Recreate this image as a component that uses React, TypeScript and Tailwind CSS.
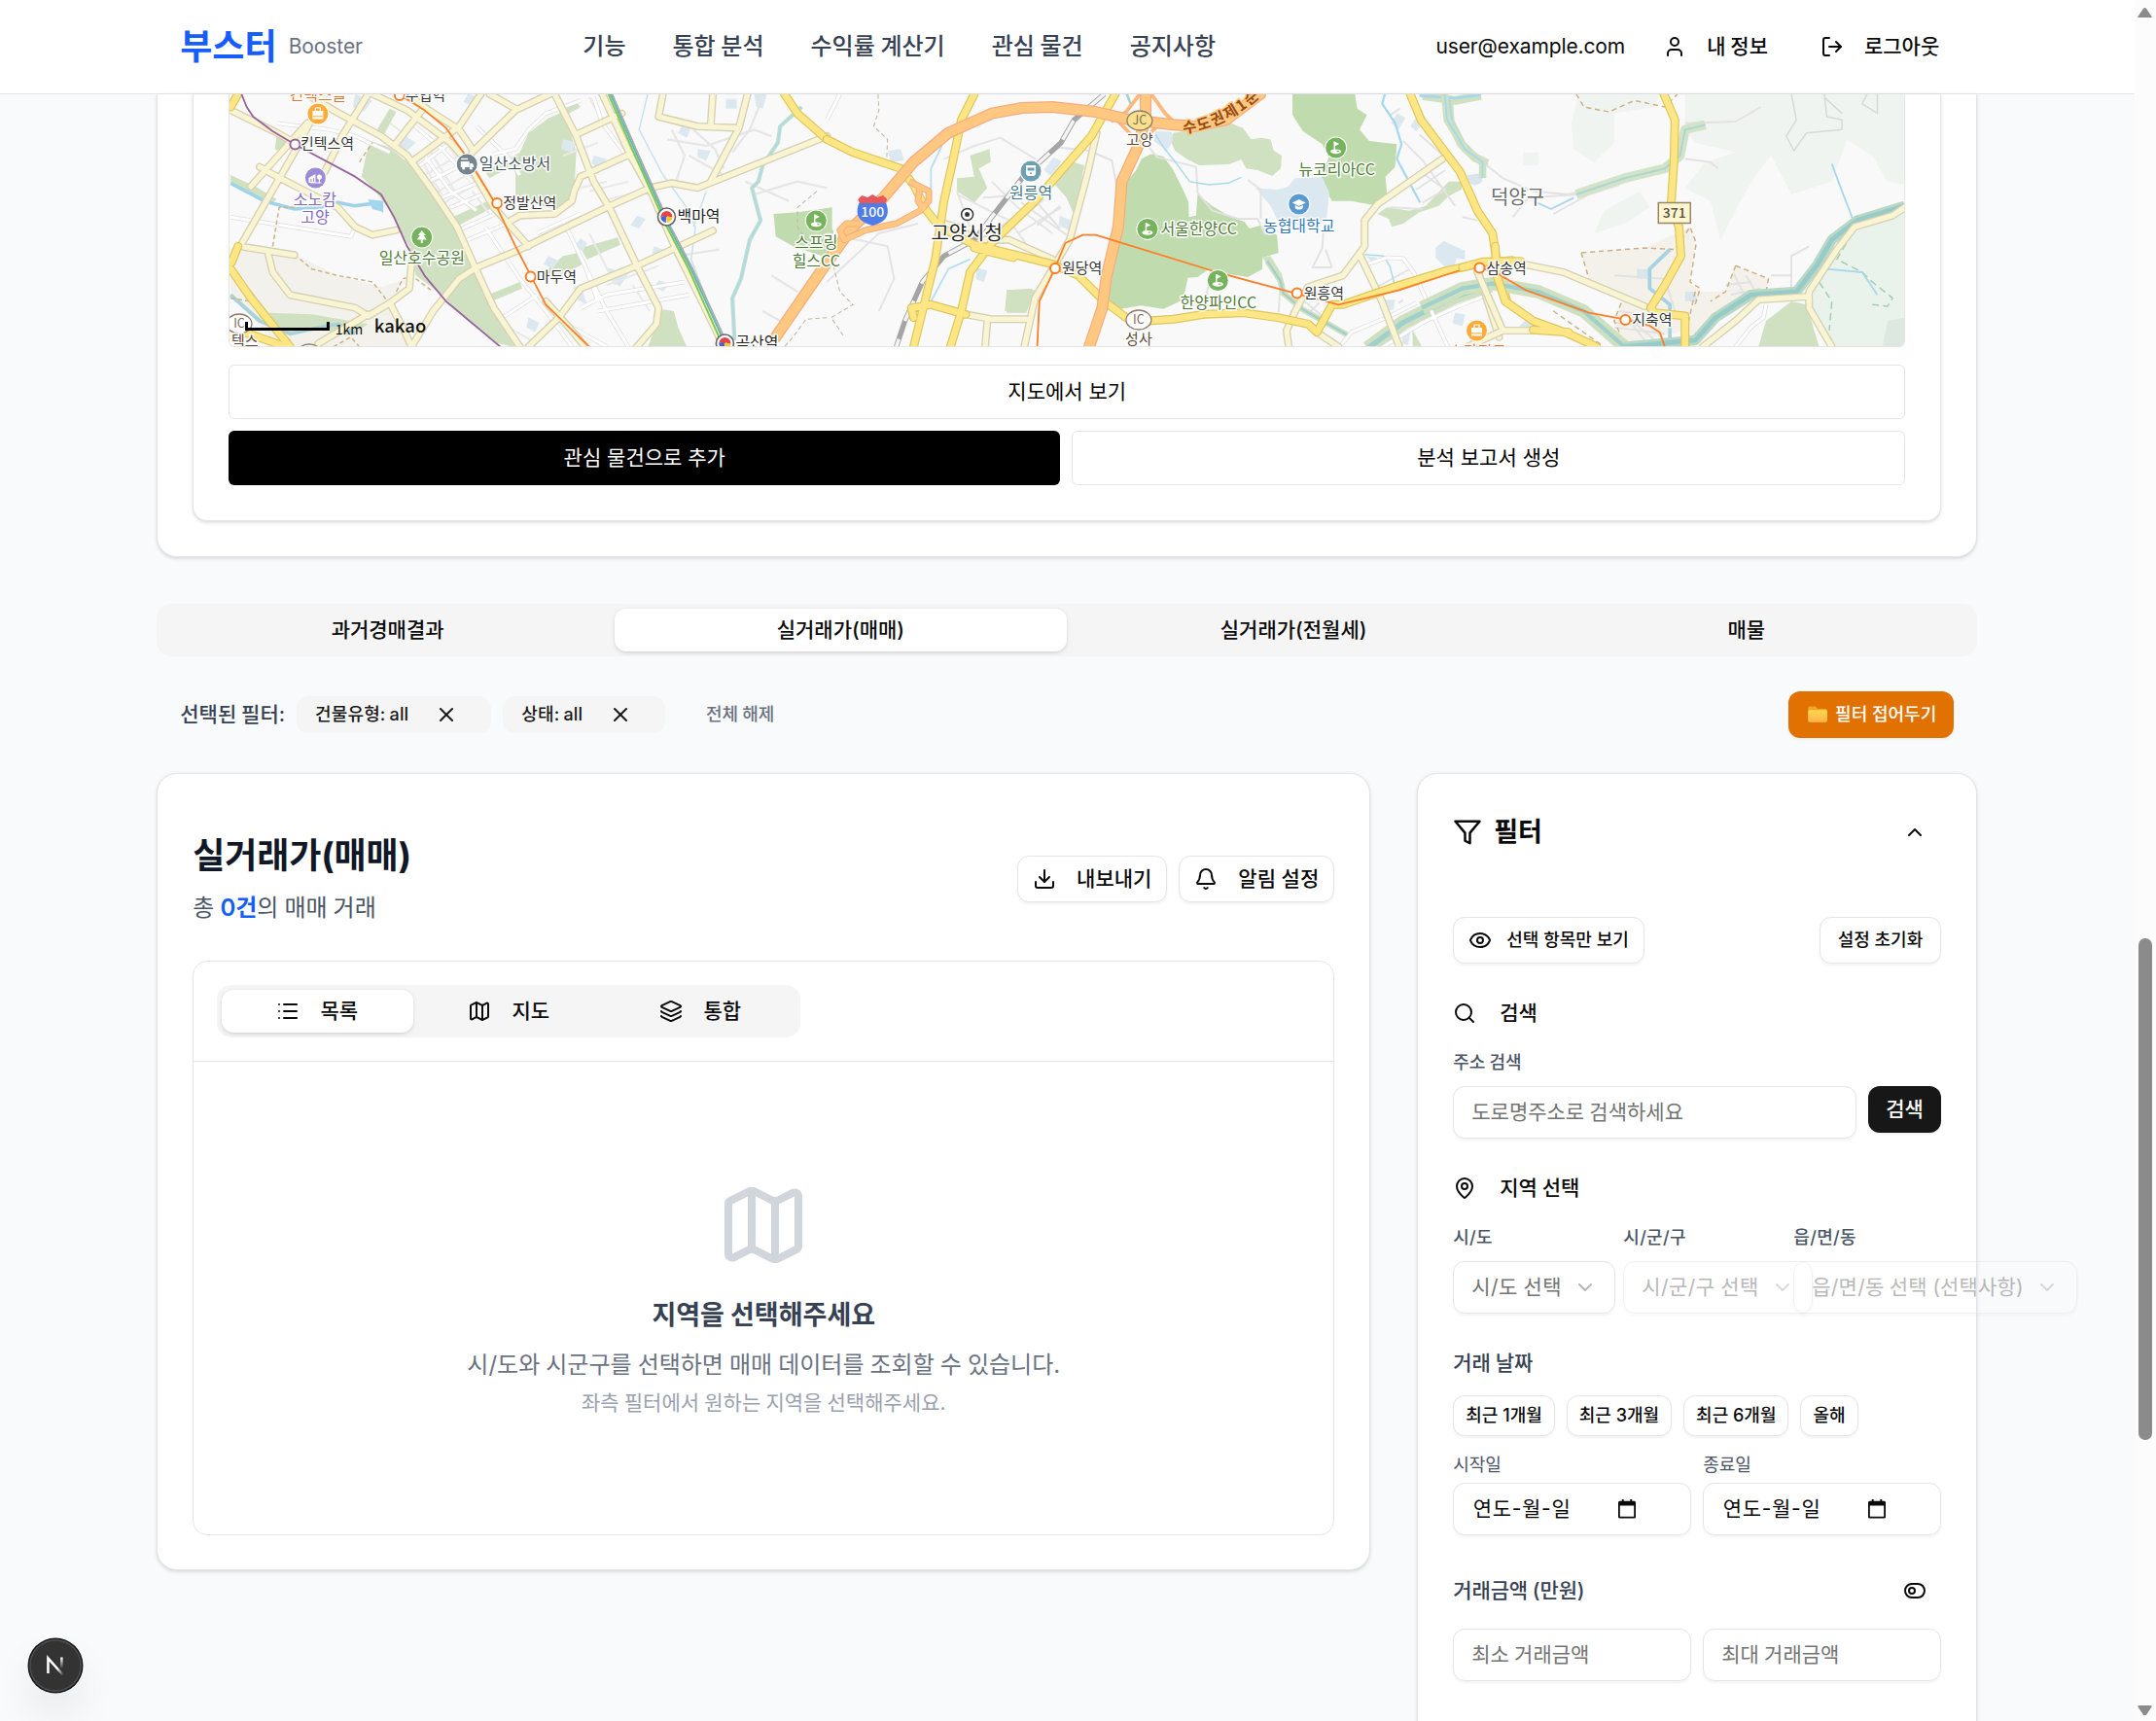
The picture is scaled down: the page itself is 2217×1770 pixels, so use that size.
import React from "react";
import {
  Bell,
  ChevronDown,
  ChevronUp,
  Download,
  Eye,
  Layers,
  List,
  LogOut,
  Map as MapIcon,
  MapPin,
  Search,
  ToggleLeft,
  User,
  X,
} from "lucide-react";

const NAV = ["기능", "통합 분석", "수익률 계산기", "관심 물건", "공지사항"];
const TABS = ["과거경매결과", "실거래가(매매)", "실거래가(전월세)", "매물"];

/* ---------- map ---------- */

type Kind = "light" | "yellow" | "motor";

const ROAD: Record<Kind, [string, number, string, number]> = {
  light: ["#d6d0b4", 5.4, "#f9f4d2", 3.6],
  yellow: ["#dcc75c", 6, "#fee685", 4.4],
  motor: ["#f3ac80", 8, "#ffc77f", 6.4],
};

function Roads({ kind, d }: { kind: Kind; d: string }) {
  const [edge, w1, fill, w2] = ROAD[kind];
  return (
    <g fill="none" strokeLinecap="round" strokeLinejoin="round">
      <path d={d} stroke={edge} strokeWidth={w1} vectorEffect="non-scaling-stroke" />
      <path d={d} stroke={fill} strokeWidth={w2} vectorEffect="non-scaling-stroke" />
    </g>
  );
}

function Line({ d, color, w, dash }: { d: string; color: string; w: number; dash?: string }) {
  return (
    <path
      d={d}
      fill="none"
      stroke={color}
      strokeWidth={w}
      strokeDasharray={dash}
      strokeLinejoin="round"
      vectorEffect="non-scaling-stroke"
    />
  );
}

function Street({ d }: { d: string }) {
  return (
    <g>
      <Line d={d} color="#dedede" w={3} />
      <Line d={d} color="#ffffff" w={2} />
    </g>
  );
}

function Label({
  x,
  y,
  t,
  color = "#333333",
  size = 15,
  anchor = "start",
  weight = 400,
}: {
  x: number;
  y: number;
  t: string;
  color?: string;
  size?: number;
  anchor?: "start" | "middle";
  weight?: number;
}) {
  return (
    <text
      x={x}
      y={y + size * 0.36}
      fontSize={size}
      fontWeight={weight}
      fill={color}
      stroke="#ffffff"
      strokeWidth={3}
      strokeLinejoin="round"
      paintOrder="stroke"
      textAnchor={anchor}
    >
      {t}
    </text>
  );
}

function Station({ x, y, color = "#ff7a1f" }: { x: number; y: number; color?: string }) {
  return <circle cx={x} cy={y} r={5} fill="#fff" stroke={color} strokeWidth={2} />;
}

function Taegeuk({ x, y }: { x: number; y: number }) {
  return (
    <g transform={`translate(${x} ${y})`}>
      <circle r={9} fill="#fff" stroke="#666" strokeWidth={1.6} />
      <path d="M-6 0a6 6 0 0 1 12 0c-2 2-4-2-6 0s-4-2-6 0z" fill="#e8434a" />
      <path d="M-6 -1a6 6 0 0 0 6 7c-2-3 1-4 0-6s-4 1-6-1z" fill="#3f66d6" />
      <path d="M0 6a6 6 0 0 0 6-6c-2 1-4-1-6 0s1 3 0 6z" fill="#f6c831" />
    </g>
  );
}

function Pin({ x, y, color, kind }: { x: number; y: number; color: string; kind: string }) {
  return (
    <g transform={`translate(${x} ${y})`}>
      <circle r={11.5} fill="#fff" />
      <circle r={10.5} fill={color} />
      {kind === "golf" && (
        <g>
          <path d="M-1.5-6.500V2" stroke="#fff" strokeWidth={1.400} />
          <path d="M-1.500-6.500L3.500-4-1.500-1.500z" fill="#fff" />
          <ellipse cx={0} cy={3.800} rx={5.500} ry={2.400} fill="#fff" />
          <ellipse cx={2} cy={3.600} rx={1.500} ry={0.700} fill={color} />
        </g>
      )}
      {kind === "tree" && <path d="M0-7l4 5h-2l3 4.500H1V6h-2V2.500h-4l3-4.500h-2z" fill="#fff" />}
      {kind === "bag" && (
        <g>
          <rect x={-5.500} y={-3} width={11} height={8.500} fill="#fff" />
          <path d="M-2.500-3v-3h5v3" fill="none" stroke="#fff" strokeWidth={1.200} />
          <path d="M-5.500 2.800h11" stroke={color} strokeWidth={1} />
        </g>
      )}
      {kind === "bus" && (
        <g>
          <rect x={-6.500} y={-3} width={9} height={6} fill="#fff" />
          <path d="M3-1h2.500l1.500 2v2h-4z" fill="#fff" />
          <path d="M-6-5.500h7" stroke="#fff" strokeWidth={1.500} />
          <circle cx={-3.500} cy={4} r={1.600} fill="#fff" />
          <circle cx={4} cy={4} r={1.600} fill="#fff" />
        </g>
      )}
      {kind === "hotel" && (
        <g>
          <path d="M-7 5V0l7-4v9z" fill="#fff" />
          <circle cx={4} cy={-1} r={2.600} fill="#fff" />
          <path d="M4 1v4M-5 5h11" stroke="#fff" strokeWidth={1.200} />
          <path d="M-4.500 1v3M-2 0v4" stroke={color} strokeWidth={1} />
        </g>
      )}
      {kind === "train" && (
        <g>
          <path d="M-5-6H5V3L3.500 5h-7L-5 3z" fill="#fff" />
          <rect x={-3.500} y={-3.500} width={7} height={3} fill={color} />
          <circle cx={0} cy={2.200} r={1} fill={color} />
        </g>
      )}
      {kind === "school" && (
        <g>
          <path d="M-7-1.500L0-5l7 3.500L0 2z" fill="#fff" />
          <path d="M-4 1v3c2 2 6 2 8 0V1L0 3z" fill="#fff" />
        </g>
      )}
    </g>
  );
}

function Junction({ x, y, t, fill }: { x: number; y: number; t: string; fill: string }) {
  return (
    <g>
      <ellipse cx={x} cy={y} rx={13} ry={10} fill={fill} stroke="#8f7d6a" strokeWidth={1.300} />
      <text x={x} y={y + 4.500} fontSize={12.500} textAnchor="middle" fill="#7a6a5a">
        {t}
      </text>
    </g>
  );
}

function KakaoMap() {
  return (
    <svg
      viewBox="235 97 1724 259"
      preserveAspectRatio="none"
      className="block h-full w-full font-['Noto_Sans_CJK_KR',sans-serif]"
    >
      <rect x={235} y={97} width={1724} height={260} fill="#f9f9f9" />

      {/* western part: Ilsan */}
      <g transform="translate(150 0) scale(0.44643 0.33333)">
        <path d="M193 770L340 785 440 850 540 885 600 860 560 930 600 1070H300L193 900z" fill="#f3f1ec" />
        <g fill="#d0e1c2">
          <path d="M515 435L560 455 600 500 640 570 690 640 720 720 760 830 790 930 830 1030 850 1072 810 1060 740 990 680 910 620 850 605 760 575 690 555 640 520 580 495 545 505 480z" />
          <path d="M880 410L925 365 960 345 975 400 990 470 985 600 960 650 920 640 850 615 850 540 845 510 790 550 780 530 860 470z" />
          <path d="M985 310L1000 330 960 360 950 340zM560 335L575 345 545 420 525 412zM705 670L800 612 805 635 715 698zM920 835L960 790 995 780 1005 815 935 860zM1000 765L1085 733 1092 755 1015 800zM1190 955L1215 960 1225 1010 1245 1070H1155zM740 935L860 870 865 890 740 962z" />
          <path d="M240 895L280 965 380 970 510 1000 470 1035 380 1010 330 1035 260 980zM300 410L325 420 310 470 295 460z" />
          <path d="M193 540L250 575 300 615 290 625 193 570z" />
        </g>
        <g fill="#dce8f0">
          <path d="M740 290l30 10-15 30-25-15zM590 415l30 25-25 30-15-25zM480 290l40 20-20 35-25-15zM960 430l30 10-10 30-25-10zM1030 480l30 10-15 30-20-15zM1130 665l20 10-15 30-20-10zM1000 735l15 15-10 25-20-15zM925 790l25 15-15 25-20-15zM1060 825l50 20-20 40-20-20zM985 880l20 20 10 40-30-20zM1180 865l25 10-15 25-20-15zM1235 385l20 10-10 30-20-15zM1270 460l30 5-10 30-20-10zM1400 290h30l-10 45-15-5zM1335 305h25v30h-25zM880 980l25 15-10 30-20-15zM1170 760l20 10-10 20-15-10z" />
        </g>
        <path d="M1445 660L1500 655 1580 640V800L1490 760 1450 730z" fill="#c0dbad" />
        <Line
          d="M635 500L680 600M655 470L710 590M690 440L770 590M640 540L720 480M650 570L740 500M660 600L750 530M680 630L770 560M1020 300L1060 400M1040 440L960 480M1060 560L1000 580M560 380L600 420M1020 590L1110 560M1050 620L1110 600M1020 720L1080 880M1060 880L1180 820M820 1000L900 1060M750 590L790 660M1120 880L1160 960"
          color="#e9e9e9"
          w={1.400}
        />
        <Street d="M610 380L680 460 750 560M640 480L700 590 760 650M760 390L830 480 860 540M800 475L850 460 880 400 920 350 1000 310M650 560L740 500M620 520L700 440M680 610L770 560M700 640L790 590M900 720L1000 660M960 680L1060 960 1110 1070M720 710L820 650M740 740L830 690M780 700L860 860 920 960 980 1070M820 980L900 910M1000 950L1060 910 1240 870M1040 960L1250 910M300 380L420 400 480 420 560 470M1030 300L1050 380 1100 470M193 670L470 730 480 700M940 980L1060 1070M1010 820L1040 930" />
        <Line
          d="M1210 400L1240 480 1220 560M1260 400L1310 460 1330 520M1200 430L1290 450 1400 400 1440 420M1420 300L1390 400 1350 470M1250 480L1330 540M1220 790L1320 770M1400 600L1500 560 1568 580M1420 960L1460 990 1500 950M1380 560L1480 620M1440 850L1500 900"
          color="#e6e6e6"
          w={1.500}
        />
        <Line d="M1155 290L1135 400 1190 540 1245 640 1265 700 1255 800 1290 920M1290 590L1260 700" color="#c5e4ea" w={1} />
        <Line
          d="M1510 330L1460 390 1455 440 1420 510 1410 560 1395 580 1415 680 1390 740 1370 860 1350 920 1355 1050"
          color="#c4dfcf"
          w={2.800}
        />
        <Line
          d="M1510 330L1460 390 1455 440 1420 510 1410 560 1395 580 1415 680 1390 740 1370 860 1350 920 1355 1050"
          color="#aedbe0"
          w={1.400}
        />
        <Line d="M193 565L270 620 340 645 400 640 440 625 480 635 540 625" color="#9fd3ea" w={2.400} />
        <path d="M510 615L545 620 545 655 520 645z" fill="#a3d6ee" />
        <Line d="M193 910L260 990 330 1030 380 1015 440 1000 480 1030" color="#a9d3d8" w={2.600} />
        <Line
          d="M340 785L380 830 440 850 520 870 555 930M430 1070L470 1040 490 1070M290 760L305 640 350 640M490 500L520 440M193 920L240 930 330 1050M620 860L660 900M575 900L590 860 620 850"
          color="#c9b48b"
          w={1}
          dash="3 2"
        />
        <Line d="M1545 590L1500 640 1500 700 1530 760M1568 980L1520 985 1490 1040 1470 1070" color="#bdb7a5" w={0.700} dash="3 2" />
        <Roads
          kind="light"
          d="M193 340L300 410 340 440M380 300L430 340 540 420 600 480 660 590 715 700 755 820 800 950 860 1070M520 290L600 340 700 440 740 500 800 640 880 760M600 290L650 340 720 400 750 460M370 380L240 575M510 290L450 420 410 530M410 290L340 470 215 760M260 515L300 545 380 600 440 640 480 700 520 725 575 710M215 760L340 787M280 785L290 840 330 910 480 950 510 975 560 935 605 890 610 810M395 1060L510 970M560 935L590 1010 610 1070 660 960 720 860 760 825 860 770 1060 640 1160 580 1210 565 1270 580 1568 420M610 500L720 390 770 290M640 330L570 450M750 470L850 340 930 290M790 290L850 335M940 290L990 420 1030 560 1070 650 1130 820 1180 950 1175 1000 1130 1070M990 415L1095 350M1115 475L1000 545 985 590 980 620 940 660 860 665 840 680M1050 290L1115 480 1165 600 1220 770 1280 930 1330 1070M1305 712L1130 820 1000 890 950 980 880 1070M1190 290L1180 360 1270 390 1365 395 1385 290M1305 290L1300 390M1365 395L1300 560M920 930L980 1020 1010 1070"
        />
        <Roads kind="yellow" d="M210 760L195 810M193 830L240 920 300 1020 330 1070M193 1010L320 1070M210 290L193 330M1470 290L1500 350 1568 430" />
        <Line
          d="M218 290L230 330 245 360 290 405 340 445 480 545 540 600 570 670 600 760 640 850 690 930 815 1070"
          color="#98629a"
          w={1.200}
        />
        <Line d="M1064 290L1119 460 1199 700 1249 830 1326 1060" color="#7fc84e" w={1.300} />
        <Line d="M1069 290L1124 460 1204 700 1255 830 1333 1060" color="#5fb8b4" w={1.300} />
        <Line d="M1073 290L1128 460 1208 700 1259 830 1338 1060" color="#a8a8a8" w={1} />
        <Line d="M580 290L640 340 690 395 740 490 800 620 850 760 885 850 920 940 1020 1070" color="#ff7f27" w={1.200} />
      </g>

      {/* middle part: Goyang */}
      <g transform="translate(850 0) scale(0.44643 0.33333)">
        <g fill="#d0e1c2">
          <path d="M330 480L375 460 378 500 350 520 370 580 340 625 300 590 300 550 340 545zM415 895L480 895 460 965 410 960z" />
        </g>
        <path d="M-5 700L15 710 15 810-5 820z" fill="#c0dbad" />
        <g fill="#dce8f0">
          <path d="M140 465l30-5 8 35-30 5zM345 825l25 10-8 35-18-8zM1450 965l22 5-6 35-20-5z" />
        </g>
        <Line
          d="M270 490L340 450 400 425 480 490M300 600L420 680 480 790M380 560L440 640 520 720M360 610L460 600M400 700L500 600M440 720L540 640M300 590L330 700M0 720L140 760 155 860 120 960M210 690L120 720 0 870"
          color="#e4e4e4"
          w={1.300}
        />
        <Street d="M30 290L0 370" />
        <Line d="M118 290L120 340 108 390 140 430 138 490M15 820L30 900 60 940 10 980 40 1040" color="#bdb7a5" w={0.700} dash="3 2" />
        <Line d="M265 450L240 520 240 600M330 800L280 830 240 930M690 290L700 320" color="#b5dff0" w={1.200} />
      </g>

      {/* golf courses, campus and river around Wonheung */}
      <g transform="translate(1030 95) scale(0.33333)">
        <g fill="#c0dbad">
          <path d="M462 190L500 198 530 240 560 300 577 340 578 385 600 380 605 315 650 350 700 380 750 400 765 420 800 410 850 440 855 495 805 510 805 545 760 570 700 560 640 545 605 570 575 572 560 640 500 668 430 658 345 672 318 655 335 540 362 440 372 310 395 265 415 240 432 205z" />
          <path d="M898 0H1090L1098 50 1128 70 1105 115 1135 150 1220 160 1215 230 1185 260 1190 315 1150 348 1080 335 1020 335 1000 300 985 265 1010 200 990 160 930 120 898 70z" />
        </g>
        <g fill="#d0e1c2">
          <path d="M530 125L620 110 700 92 745 110 770 145 800 140 830 145 840 180 865 195 862 235 835 258 790 240 755 235 740 208 700 222 610 225 570 205 535 180 520 145zM160 280L175 240 210 212 255 225 240 310 222 375 200 325zM15 610L95 605 90 640 70 680 15 680zM1160 375L1190 355 1260 365 1310 350 1380 275 1425 275 1420 300 1380 320 1350 350 1290 370 1240 405 1205 415 1195 390zM805 510L830 505 865 560 875 600 865 605 845 560zM1268 730L1300 790H1270z" />
        </g>
        <g fill="#dce8f0">
          <path d="M783 295L850 300 885 290 905 265 990 262 1012 310 1002 400 860 410 830 350zM475 120L525 122 528 150 510 180 470 150zM1340 480L1365 458 1432 490 1430 515 1405 512 1395 545 1370 540 1340 510zM160 200L185 212 155 260 130 240zM1220 65L1248 78 1225 115 1203 95zM1290 60L1310 85 1280 120 1262 105zM180 380L215 395 205 425 175 410zM1185 640L1215 640 1210 670 1185 675zM1400 680L1430 690 1420 720 1392 710zM1125 505L1160 510 1150 530zM1240 740L1262 740 1255 780 1235 775zM1450 270L1480 250 1485 275 1460 290z" />
        </g>
        <Line
          d="M455 170L480 200 600 230 605 310M605 310L650 365 730 390 790 390 815 440M155 180L180 170 270 180 340 210 355 290M60 340L200 440M100 330L180 420M70 380L130 330M110 410L180 350M760 270L800 300 800 390M995 410L990 480 960 540 1020 540M1000 485L1020 540M640 590L620 680M860 600L855 680M930 640L1000 700M950 680L980 650M1200 70L1230 50M1240 150L1300 210 1400 350M1290 130L1380 210M1280 300L1370 240M1300 340L1370 300 1300 250M1200 355L1300 360M1270 540L1160 600M1225 650L1240 640"
          color="#e2e2e2"
          w={1.300}
        />
        <Line d="M475 130L500 170 540 220 580 275 640 285 700 280 740 262" color="#a9dbe8" w={1} />
        <Line d="M385 0L400 40" color="#9fd0cc" w={1.500} />
        <Line d="M1185 0L1175 35 1215 95 1235 160 1220 205 1260 280 1292 340" color="#a5d8ec" w={1.500} />
        <Line d="M1300 10L1400 25 1480 10M1380 20L1385 90 1420 160 1460 200 1500 220" color="#d0e1c2" w={6} />
        <Line d="M1290 10L1400 18 1480 8M1380 20L1390 90 1430 160 1470 200 1500 225" color="#a5d8ec" w={1.800} />
        <Line d="M820 520L860 580 870 620 930 670 1000 710 1070 750" color="#cfe0c0" w={4} />
        <Line d="M820 520L860 580 870 620 930 670 1000 710 1070 750" color="#9fd0cc" w={1.500} />
        <Line d="M1120 500L1180 505 1200 540 1215 600" color="#a9dbe8" w={1} />
        <Line d="M1130 790L1240 710 1400 630 1510 595" color="#cfe0c0" w={10} />
        <Line d="M1130 790L1240 710 1400 630 1510 595" color="#9fd0cc" w={3.500} />
        <Street d="M1130 530L1190 510 1240 512 1275 560 1320 660 1380 790M1040 790L1080 740 1200 690 1280 650M1170 790L1300 710 1410 660 1500 625" />
      </g>

      {/* middle part: road network */}
      <g transform="translate(850 0) scale(0.44643 0.33333)">
        <Roads
          kind="light"
          d="M622 410L600 540 560 740 520 830 480 920 455 1070M320 970L380 985 460 985M370 990L365 1070M270 690L300 700 340 740 420 740 470 770 520 800M1420 490L1270 630 1240 680 1240 760 1190 850 1110 885 1080 960 1060 1020 1065 1070M1230 790L1280 930 1320 1070M1500 830L1550 1040M1130 1025L1180 1070"
        />
        <Line d="M640 290L570 370 540 440 450 550 380 670 340 740 270 790 220 870 180 990 160 1070" color="#a5a5a5" w={3.600} />
        <Line
          d="M640 290L570 370 540 440 450 550 380 670 340 740 270 790 220 870 180 990 160 1070"
          color="#f4f4f4"
          w={2.300}
          dash="15 13"
        />
        <Roads
          kind="yellow"
          d="M0 430L60 470 170 520 200 570 230 650 260 700 340 755 520 815 580 850 640 930 690 980 740 990 800 985 870 970 960 965 1040 980 1110 1000 1130 1025 1165 940 1190 940 1320 880 1430 835 1500 815 1580 803M340 290L310 370 290 500 270 620 250 800 200 1070M665 290L610 420 480 620 380 750 330 840 310 960 285 1070M1345 290L1370 370 1460 530 1500 650 1535 720 1545 810 1568 930M320 970L240 940 195 950 200 980M340 765L430 795"
        />
        <Line d="M722 290L690 345 655 375M748 290L780 350 810 388M672 375L705 420M765 385L735 425" color="#ffb878" w={2.500} />
        <Roads kind="motor" d="M735 290L735 360 718 450 680 560 672 700 645 850 635 950 605 1070" />
        <Roads
          kind="motor"
          d="M-118 1040L0 810 60 700 130 610 200 500 280 410 380 350 450 333 520 330 620 345 700 370 800 385 850 390 920 370 1000 290"
        />
        <g fill="none" strokeLinejoin="round">
          <Line d="M190 560L235 590 235 620 215 650 160 690 90 710 40 740 30 710 45 690 75 690M215 570L210 620 225 650" color="#f3ac80" w={4.600} />
          <Line d="M190 560L235 590 235 620 215 650 160 690 90 710 40 740 30 710 45 690 75 690M215 570L210 620 225 650" color="#ffc77f" w={3.300} />
        </g>
        <Line
          d="M485 1070L490 930 525 830 550 750 590 725 620 725 900 840 1080 905 1180 940 1320 895 1480 825 1510 825 1568 860"
          color="#ff7f27"
          w={1.200}
        />
      </g>

      {/* eastern part: Deogyang */}
      <g transform="translate(1400 0) scale(0.52105 0.33333)">
        <g fill="#eff4f0">
          <path d="M430 290H590L580 330 500 350 500 440 460 500 420 460 415 380z" />
          <path d="M640 290H1074V570L1040 560 1010 480 960 430 930 560 850 600 810 480 780 540 750 620 710 740 690 620 640 580 680 500 740 470 660 440 640 400z" />
          <path d="M480 650L550 590 570 640 520 690 460 720zM320 470h30v40h-30z" />
        </g>
        <path d="M1074 650V1072H930L890 950 900 850 970 720z" fill="#eaf2ec" />
        <path d="M435 780L560 765 650 700 660 750 650 870 670 900 640 1020 520 1060 500 990 520 910 450 860z" fill="#f4f1eb" />
        <path d="M740 820L805 860 800 900 760 910 700 990 640 1060 650 900 720 900z" fill="#f4f1eb" />
        <path d="M785 1070L800 990 850 930 880 940 905 1070z" fill="#d0e1c2" />
        <path d="M1030 1070L1040 990 1074 980V1070z" fill="#dde9e0" />
        <path d="M545 830h25v30h-25zM640 900h20l5 30h-25zM210 540l30-5-5 30-20 5zM310 1010l20-30 15 30z" fill="#d9e6ee" />
        <Line
          d="M240 500L280 550 340 590 410 600 520 550M300 670L330 610 430 600M380 660L450 600 510 570M640 380L740 375 790 330M640 490L690 500 705 520M500 850L600 860 620 960M720 880L770 870M730 910L790 890M500 1010L600 1030M530 980L580 1050M510 960L600 980M500 995L590 1010M520 970L560 1050M550 970L600 1050M810 850L850 850M850 900V790L885 760M200 670L230 680M735 840L760 920M760 850L780 900"
          color="#e2e2e2"
          w={1.300}
        />
        <Line
          d="M435 780L450 860M435 780L560 765 620 770 650 700 662 750 650 870 670 890 660 940M740 820L805 860 800 900M740 820L720 900 690 930M520 910L500 990 520 1060M380 960L480 1070M425 290L440 330 490 345 540 310 600 330 625 290M660 900L640 1040M690 1000L760 915"
          color="#cdb083"
          w={1}
          dash="3.500 2.500"
        />
        <Line d="M850 290L860 370 840 420 855 465 880 410 950 400 950 370 920 360 915 290M915 300L950 350M1000 290L990 320 1020 350 1020 290" color="#d5dad5" w={1} />
        <Line d="M970 720L940 800 990 840 1010 870 1050 920 1040 945 1010 940M905 870L930 930 925 1020" color="#9fcfae" w={1} dash="5 3" />
        <Line d="M425 600L520 550 600 520 630 480 640 400 680 385" color="#d3e3c8" w={6.500} />
        <Line d="M425 600L520 550 600 520 630 480 640 400 680 385" color="#a9d6d2" w={1.300} />
        <Line d="M165 290L170 370 205 460 240 500 240 550" color="#d0e1c2" w={5} />
        <Line d="M165 290L170 370 205 460 240 500 240 550M930 505L950 590 975 690M340 620L375 645 420 610M920 830L990 840 1020 910" color="#a5d8ec" w={1.200} />
        <Line d="M610 770L570 830 570 890 610 940 610 1070" color="#a5d3e4" w={2.500} />
        <Line d="M120 950L200 890 260 875 350 900 440 960 520 1070" color="#cfe0c0" w={9} />
        <Line d="M120 950L200 890 260 875 350 900 440 960 520 1070" color="#9fd0cc" w={2.800} />
        <Line d="M520 1070L660 1050 700 980 770 910 860 900 900 820 930 740 980 680 1074 635" color="#b9d8c4" w={7} />
        <Line d="M520 1070L660 1050 700 980 770 910 860 900 900 820 930 740 980 680 1074 635" color="#96cbc9" w={3.200} />
        <Street d="M800 940L795 980 770 1010 740 1070" />
        <Roads
          kind="light"
          d="M320 815L400 840 560 945M230 840L280 1020 210 1070M280 1020L340 1020M1074 640L1050 665 975 700 940 770 885 900 885 950 930 1070M880 915L785 925 740 990 675 1070"
        />
        <Roads
          kind="yellow"
          d="M598 290L620 370 618 500 612 640 628 700 632 790 600 880 572 950 580 965 640 975 640 1070M265 760L268 850 285 930 340 990 410 1030 465 1070M200 825L240 808 315 806M340 1018L410 1025"
        />
        <Line d="M245 830L265 840 325 895 450 965 520 985 570 1005 590 1025 600 1070" color="#ff7f27" w={1.200} />
      </g>

      <Junction x={245} y={333} t="IC" fill="#ffffff" />
      <Junction x={317} y={364} t="" fill="#ffffff" />
      <Junction x={1172} y={124} t="JC" fill="#fbe08c" />
      <Junction x={1171} y={329} t="IC" fill="#ffffff" />

      <Pin x={326} y={117} color="#ffab38" kind="bag" />
      <Pin x={323.5} y={183} color="#9c8bd6" kind="hotel" />
      <Pin x={433} y={244} color="#76b35c" kind="tree" />
      <Pin x={479.5} y={169} color="#74858f" kind="bus" />
      <Pin x={839} y={227} color="#76b35c" kind="golf" />
      <Pin x={1060} y={176} color="#6f9fb2" kind="train" />
      <Pin x={1374} y={152} color="#76b35c" kind="golf" />
      <Pin x={1180} y={235.5} color="#76b35c" kind="golf" />
      <Pin x={1252.5} y={288.5} color="#76b35c" kind="golf" />
      <Pin x={1336} y={210} color="#5b9ad0" kind="school" />
      <Pin x={1519} y={340} color="#ffab38" kind="bag" />

      <Station x={302.5} y={148.5} color="#98629a" />
      <Station x={410} y={98} />
      <Station x={510.5} y={209} />
      <Station x={545} y={284.5} />
      <Station x={1085} y={276} />
      <Station x={1334} y={301.5} />
      <Station x={1522} y={275.5} />
      <Station x={1672} y={329} />
      <Taegeuk x={685} y={223} />
      <Taegeuk x={745} y={353} />

      <g>
        <path d="M882 205l4-4 6 2 5-3 5 3 6-2 4 4-2 5h-26z" fill="#e9575b" />
        <path d="M883 209h28c3 8 2 14-3 18-4 3-8 4-11 5-3-1-7-2-11-5-5-4-6-10-3-18z" fill="#4e7ce8" />
        <text x={897} y={223} fontSize={14} fontWeight={500} textAnchor="middle" fill="#fff">
          100
        </text>
      </g>
      <g>
        <rect x={1706} y={208.5} width={33} height={21} fill="#fdf6cf" stroke="#9a8468" strokeWidth={1.5} />
        <text x={1722.5} y={224} fontSize={14} fontWeight={500} textAnchor="middle" fill="#5c503f">
          371
        </text>
      </g>
      <circle cx={994.5} cy={220.5} r={6} fill="#fff" stroke="#333" strokeWidth={1.5} />
      <circle cx={994.5} cy={220.5} r={2.5} fill="#333" />

      <path id="ring-road" d="M1217 137Q1264 133 1308 88" fill="none" />
      <text fontSize={15.5} fontWeight={700} letterSpacing={1.6} fill="#9a4a12" stroke="#ffc77f" strokeWidth={3} paintOrder="stroke">
        <textPath href="#ring-road">수도권제1순</textPath>
      </text>

      <Label x={326} y={97} t="킨텍스몰" color="#e8742a" size={16} anchor="middle" />
      <Label x={416} y={98} t="주엽역" />
      <Label x={308} y={148} t="킨텍스역" />
      <Label x={492} y={168.5} t="일산소방서" size={16} color="#45525c" />
      <Label x={323} y={205} t="소노캄" size={16} color="#8068c4" anchor="middle" />
      <Label x={323} y={223} t="고양" size={16} color="#8068c4" anchor="middle" />
      <Label x={433} y={265} t="일산호수공원" size={16} color="#4d7a33" anchor="middle" />
      <Label x={516.5} y={208.5} t="정발산역" />
      <Label x={551} y={284.5} t="마두역" />
      <Label x={696} y={222.5} t="백마역" size={16} color="#222222" />
      <Label x={756} y={352} t="곡산역" size={16} color="#222222" />
      <Label x={237} y={351} t="텍스" color="#5c4a3a" />
      <Label x={839} y={249.5} t="스프링" size={16} color="#4d7a33" anchor="middle" />
      <Label x={839} y={268} t="힐스CC" size={16} color="#4d7a33" anchor="middle" />
      <Label x={994} y={240} t="고양시청" size={20} color="#222222" anchor="middle" />
      <Label x={1060} y={198} t="원릉역" size={16} color="#3f7690" anchor="middle" />
      <Label x={1172} y={143.5} t="고양" color="#5c4a3a" anchor="middle" />
      <Label x={1171} y={349} t="성사" color="#5c4a3a" anchor="middle" />
      <Label x={1375} y={174} t="뉴코리아CC" size={16} color="#4d7a33" anchor="middle" />
      <Label x={1336} y={232} t="농협대학교" size={16} color="#2f75bd" anchor="middle" />
      <Label x={1193.5} y={235.5} t="서울한양CC" size={16} color="#4d7a33" />
      <Label x={1253} y={311} t="한양파인CC" size={16} color="#4d7a33" anchor="middle" />
      <Label x={1092} y={276} t="원당역" />
      <Label x={1341} y={302} t="원흥역" />
      <Label x={1529} y={275.5} t="삼송역" />
      <Label x={1679} y={329} t="지축역" />
      <Label x={1561} y={203} t="덕양구" size={20} color="#6b6b6b" anchor="middle" />
      <Label x={1520} y={361} t="스타필드" size={16} color="#e8742a" anchor="middle" />

      <path d="M252.500 331v7.500h84V331" fill="none" stroke="#000" strokeWidth={3} />
      <text x={344} y={344} fontSize={14} fill="#111">
        1km
      </text>
      <text x={384} y={342} fontSize={18.5} fontWeight={500} fill="#111">
        kakao
      </text>
    </svg>
  );
}

/* ---------- page parts ---------- */

function Header() {
  return (
    <header className="h-[64.670px] w-full shrink-0 border-b border-gray-200 bg-white pr-[15px]">
      <div className="mx-auto flex h-16 max-w-7xl items-center justify-between px-8">
        <div className="flex items-center">
          <span className="text-2xl font-bold text-blue-600">부스터</span>
          <span className="ml-2 text-sm tracking-[-0.05px] text-gray-500">Booster</span>
        </div>
        <nav className="flex gap-8">
          {NAV.map((n) => (
            <span key={n} className="text-base font-medium text-gray-700">
              {n}
            </span>
          ))}
        </nav>
        <div className="flex items-center gap-4 text-sm">
          <span className="tracking-[-0.080px] text-neutral-950">user@example.com</span>
          <div className="flex items-center gap-4 font-medium text-neutral-950">
            <span className="flex h-8 items-center gap-3.5 px-2.5">
              <User size={16} />내 정보
            </span>
            <span className="flex h-8 items-center gap-3.5 px-2.5">
              <LogOut size={16} />
              로그아웃
            </span>
          </div>
        </div>
      </div>
    </header>
  );
}

function Chip({ label }: { label: string }) {
  return (
    <span className="flex h-[25.5px] items-center gap-2 rounded-[8px] border border-transparent bg-neutral-100 px-3 text-xs font-medium text-neutral-900">
      <span className="tracking-[0.080px]">{label}</span>
      <span className="px-2.5">
        <X size={16} />
      </span>
    </span>
  );
}

function FolderGlyph() {
  return (
    <svg viewBox="0 0 16 14" className="h-[11.5px] w-[13.5px]">
      <defs>
        <linearGradient id="folder" x1="0" y1="0" x2="0" y2="1">
          <stop offset="0" stopColor="#ffd94f" />
          <stop offset="1" stopColor="#ffb04a" />
        </linearGradient>
      </defs>
      <path d="M0 2a1.500 1.500 0 0 1 1.500-1.500h4.500l2 2h6.500A1.500 1.500 0 0 1 16 4v8a1.500 1.500 0 0 1-1.500 1.500h-13A1.500 1.500 0 0 1 0 12z" fill="#f2a622" />
      <path d="M0 5a1.500 1.500 0 0 1 1.500-1.500H14.500A1.500 1.500 0 0 1 16 5v7a1.500 1.500 0 0 1-1.500 1.500h-13A1.500 1.500 0 0 1 0 12z" fill="url(#folder)" />
    </svg>
  );
}

function FunnelIcon() {
  return (
    <svg
      viewBox="0 0 24 24"
      className="size-5"
      fill="none"
      stroke="currentColor"
      strokeWidth={2}
      strokeLinecap="round"
      strokeLinejoin="round"
    >
      <polygon points="22 3 2 3 10 12.460 10 19 14 21 14 12.460 22 3" />
    </svg>
  );
}

function OutlineButton({ children, className }: { children: React.ReactNode; className: string }) {
  return (
    <button
      className={`flex items-center rounded-[8px] border border-neutral-200 bg-white font-medium text-neutral-950 shadow-xs ${className}`}
    >
      {children}
    </button>
  );
}

function TextBox({ placeholder, className = "" }: { placeholder: string; className?: string }) {
  return (
    <div
      className={`flex h-9 items-center rounded-[8px] border border-neutral-200 px-3 text-sm text-neutral-500 shadow-xs ${className}`}
    >
      {placeholder}
    </div>
  );
}

function SelectBox({ label, text, disabled, spacing }: { label: string; text: string; disabled?: boolean; spacing: string }) {
  return (
    <div className="w-[111px] shrink-0">
      <div className="text-xs font-medium tracking-[0.2px] text-gray-600">{label}</div>
      <div
        className={`mt-2 flex h-9 w-max items-center gap-2 rounded-[8px] border border-neutral-200 px-3 text-sm whitespace-nowrap text-neutral-500 shadow-xs ${spacing} ${
          disabled ? "opacity-50" : ""
        }`}
      >
        {text}
        <ChevronDown size={16} className="opacity-50" />
      </div>
    </div>
  );
}

function DateBox({ label }: { label: string }) {
  return (
    <div className="flex-1">
      <div className="text-xs text-gray-600">{label}</div>
      <div className="mt-1 flex h-9 items-center rounded-[8px] border border-neutral-200 px-[13px] text-sm text-neutral-950 shadow-xs">
        <span className="w-[99.500px] tracking-[0.450px]">연도-월-일</span>
        <svg viewBox="0 0 12 13" className="h-[13px] w-3" fill="#0a0a0a">
          <path d="M2.500 0h1.300v1.200h4.400V0h1.300v1.200H11a1 1 0 0 1 1 1V12a1 1 0 0 1-1 1H1a1 1 0 0 1-1-1V2.200a1 1 0 0 1 1-1h1.500zM1.200 4.300v7.500h9.600V4.300z" />
        </svg>
      </div>
    </div>
  );
}

function PropertyCard() {
  return (
    <section className="rounded-b-[14px] border-x border-b border-neutral-200 bg-white px-6 pb-6 shadow-sm">
      <div className="rounded-b-[10px] border-x border-b border-neutral-200 bg-white px-6 pb-6 shadow-sm">
        <div className="h-[173.330px] overflow-hidden rounded-b-[4px] border-x border-b border-neutral-200">
          <KakaoMap />
        </div>
        <button className="mt-3 flex h-[37.330px] w-full items-center justify-center rounded-[4px] border border-neutral-200 text-sm text-black">
          지도에서 보기
        </button>
        <div className="mt-2 flex gap-2 text-sm">
          <button className="h-[37.330px] flex-1 rounded-[4px] bg-black text-white">관심 물건으로 추가</button>
          <button className="h-[37.330px] flex-1 rounded-[4px] border border-neutral-200 text-black">분석 보고서 생성</button>
        </div>
      </div>
    </section>
  );
}

function TradeCard() {
  return (
    <section className="h-[546.700px] w-[832px] rounded-[14px] border border-neutral-200 bg-white px-6 pt-10 shadow-sm">
      <div className="flex items-center justify-between">
        <div>
          <h2 className="text-2xl leading-8 font-bold tracking-[-0.1px] text-gray-900">실거래가(매매)</h2>
          <p className="mt-2 text-base text-gray-600">
            총 <span className="font-semibold text-blue-600">0건</span>의 매매 거래
          </p>
        </div>
        <div className="flex gap-2">
          <OutlineButton className="h-8 gap-3.5 px-2.5 text-sm">
            <Download size={16} />
            내보내기
          </OutlineButton>
          <OutlineButton className="h-8 gap-3.5 px-2.5 text-sm">
            <Bell size={16} />
            알림 설정
          </OutlineButton>
        </div>
      </div>
      <div className="mt-6 rounded-[10px] border border-neutral-200">
        <div className="border-b border-neutral-200 p-4">
          <div className="grid h-9 w-[400px] grid-cols-3 items-center rounded-[10px] bg-neutral-100 p-[3px] text-sm font-medium text-neutral-950">
            <div className="flex h-[29px] items-center justify-center gap-3.5 rounded-[8px] bg-white shadow-sm">
              <List size={16} />
              목록
            </div>
            <div className="flex items-center justify-center gap-3.5">
              <MapIcon size={16} />
              지도
            </div>
            <div className="flex items-center justify-center gap-3.5">
              <Layers size={16} />
              통합
            </div>
          </div>
        </div>
        <div className="flex flex-col items-center py-20">
          <MapIcon size={64} className="text-gray-300" />
          <h3 className="mt-4 text-lg leading-7 font-semibold text-gray-700">지역을 선택해주세요</h3>
          <p className="mt-2 text-base text-gray-500">시/도와 시군구를 선택하면 매매 데이터를 조회할 수 있습니다.</p>
          <p className="mt-1 text-sm text-gray-400">좌측 필터에서 원하는 지역을 선택해주세요.</p>
        </div>
      </div>
    </section>
  );
}

function FilterCard() {
  return (
    <aside className="h-[760px] w-[384px] rounded-[14px] border border-neutral-200 bg-white px-6 pt-6 shadow-sm">
      <div className="flex h-8 items-center justify-between text-neutral-950">
        <div className="flex items-center gap-2">
          <FunnelIcon />
          <span className="text-lg font-semibold">필터</span>
        </div>
        <span className="px-2.5">
          <ChevronUp size={16} />
        </span>
      </div>

      <div className="mt-[42px] flex justify-between">
        <OutlineButton className="h-8 gap-2.5 px-2.5 text-xs">
          <Eye size={16} />
          선택 항목만 보기
        </OutlineButton>
        <OutlineButton className="h-8 px-3 text-xs">설정 초기화</OutlineButton>
      </div>

      <div className="mt-6 flex h-5 items-center gap-4 text-sm font-medium text-neutral-950">
        <Search size={16} />
        검색
      </div>
      <div className="mt-4 text-xs font-medium text-gray-600">주소 검색</div>
      <div className="mt-2 flex items-start gap-2">
        <TextBox placeholder="도로명주소로 검색하세요" className="flex-1" />
        <button className="h-8 rounded-[8px] bg-neutral-900 px-[12.250px] text-sm font-medium text-neutral-50 shadow-xs">
          검색
        </button>
      </div>

      <div className="mt-6 flex h-5 items-center gap-4 text-sm font-medium text-neutral-950">
        <MapPin size={16} />
        지역 선택
      </div>
      <div className="mt-4 flex gap-[5.700px]">
        <SelectBox label="시/도" text="시/도 선택" spacing="tracking-[0.3px]" />
        <SelectBox label="시/군/구" text="시/군/구 선택" spacing="tracking-[0.3px]" disabled />
        <SelectBox label="읍/면/동" text="읍/면/동 선택 (선택사항)" spacing="tracking-[0.130px]" disabled />
      </div>

      <div className="mt-6 text-sm font-medium text-gray-700">거래 날짜</div>
      <div className="mt-3 flex gap-2">
        {["최근 1개월", "최근 3개월", "최근 6개월", "올해"].map((p) => (
          <OutlineButton key={p} className="h-7 px-2 text-xs">
            {p}
          </OutlineButton>
        ))}
      </div>
      <div className="mt-3 flex gap-2">
        <DateBox label="시작일" />
        <DateBox label="종료일" />
      </div>

      <div className="mt-6 flex h-7 items-center justify-between text-sm font-medium text-gray-700">
        <span className="tracking-[-0.080px]">거래금액 (만원)</span>
        <span className="px-2.5 text-neutral-950">
          <ToggleLeft size={16} />
        </span>
      </div>
      <div className="mt-3 flex gap-2">
        <TextBox placeholder="최소 거래금액" className="flex-1" />
        <TextBox placeholder="최대 거래금액" className="flex-1" />
      </div>
    </aside>
  );
}

function Scrollbar() {
  return (
    <div className="absolute top-0 right-0 flex h-full w-[15px] flex-col items-center bg-[#fcfcfc]">
      <svg viewBox="0 0 10 7" className="mt-[5px] h-[7px] w-[10px]" fill="#8b8b8b">
        <path d="M5 0Q5.700 0 6 .5L9.700 6Q10 7 9 7H1Q0 7 .3 6L4 .5Q4.300 0 5 0z" />
      </svg>
      <div className="mt-[631px] h-[344px] w-[9px] rounded-full bg-[#8b8b8b]" />
      <svg viewBox="0 0 10 7" className="mt-auto mb-1 h-[7px] w-[10px]" fill="#8b8b8b">
        <path d="M5 7Q5.700 7 6 6.500L9.700 1Q10 0 9 0H1Q0 0 .3 1L4 6.500Q4.300 7 5 7z" />
      </svg>
    </div>
  );
}

function DevBadge() {
  return (
    <div className="absolute bottom-5 left-5 flex size-9 items-center justify-center rounded-full bg-[#333] shadow-[0_0_0_1px_#171717,inset_0_0_0_1px_rgba(255,255,255,0.14),0_16px_32px_-8px_rgba(0,0,0,0.24)]">
      <svg viewBox="0 0 20 22" className="h-[15px] w-[13px]" fill="none" strokeWidth={2.6}>
        <defs>
          <linearGradient id="nd" x1="0" y1="0" x2="1" y2="1">
            <stop offset="0.6" stopColor="#fff" />
            <stop offset="1" stopColor="#fff" stopOpacity="0" />
          </linearGradient>
          <linearGradient id="nv" x1="0" y1="0" x2="0" y2="1">
            <stop offset="0" stopColor="#fff" />
            <stop offset="1" stopColor="#fff" stopOpacity="0" />
          </linearGradient>
        </defs>
        <path d="M2.500 19V3L18.500 21" stroke="url(#nd)" />
        <rect x={15.5} y={2} width={2.6} height={12} fill="url(#nv)" />
      </svg>
    </div>
  );
}

export default function App() {
  return (
    <div className="relative flex h-[1180px] w-[1478px] flex-col overflow-hidden bg-gray-50 font-['Inter','Noto_Sans_CJK_KR',sans-serif] text-neutral-950 [word-spacing:-0.03em] [zoom:1.5]">
      <Header />
      <main className="w-full pr-[15px]">
        <div className="mx-auto max-w-7xl px-4">
          <PropertyCard />

          <div className="mt-8 grid h-9 grid-cols-4 items-center rounded-[10px] bg-neutral-100 p-[3px] text-sm font-medium text-neutral-950">
            {TABS.map((t, i) => (
              <div
                key={t}
                className={`flex h-[29px] items-center justify-center rounded-[8px] ${i === 1 ? "bg-white shadow-sm" : ""}`}
              >
                {t}
              </div>
            ))}
          </div>

          <div className="mt-6 flex h-8 items-center justify-between px-4">
            <div className="flex items-center gap-2">
              <span className="text-sm font-medium text-gray-700">선택된 필터:</span>
              <Chip label="건물유형: all" />
              <Chip label="상태: all" />
              <span className="ml-2 px-3 text-xs font-medium text-gray-500">전체 해제</span>
            </div>
            <button className="flex h-8 items-center gap-[5px] rounded-[8px] bg-amber-600 pr-3 pl-[13.300px] text-xs font-medium text-white shadow-xs">
              <FolderGlyph />
              필터 접어두기
            </button>
          </div>

          <div className="mt-6 flex items-start gap-8">
            <TradeCard />
            <FilterCard />
          </div>
        </div>
      </main>
      <DevBadge />
      <Scrollbar />
    </div>
  );
}
